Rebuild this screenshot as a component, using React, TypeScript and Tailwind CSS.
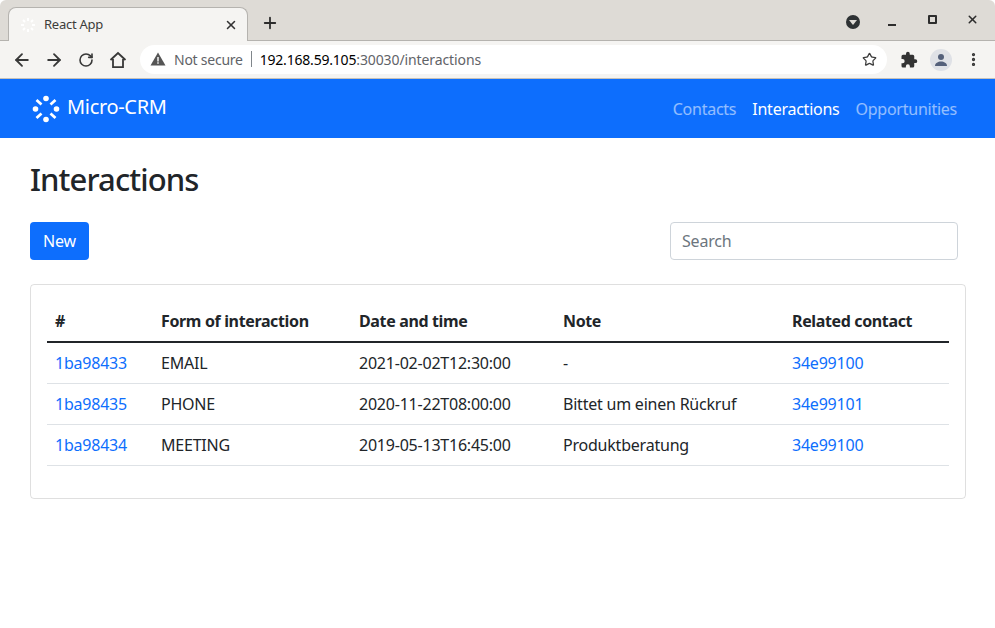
import React from 'react';
import { ArrowLeft, ArrowRight, RotateCw, Star, Plus, X, EllipsisVertical } from 'lucide-react';

const FONT = "font-['Noto_Sans','Open_Sans',sans-serif]";

interface Interaction {
  id: string;
  form: string;
  date: string;
  note: string;
  contact: string;
}

const rows: Interaction[] = [
  { id: '1ba98433', form: 'EMAIL', date: '2021-02-02T12:30:00', note: '-', contact: '34e99100' },
  { id: '1ba98435', form: 'PHONE', date: '2020-11-22T08:00:00', note: 'Bittet um einen Rückruf', contact: '34e99101' },
  { id: '1ba98434', form: 'MEETING', date: '2019-05-13T16:45:00', note: 'Produktberatung', contact: '34e99100' },
];

const Logo = () => (
  <svg width="28" height="28" viewBox="0 0 28 28" fill="white" stroke="white">
    <circle cx="14" cy="3.5" r="2.8" stroke="none" />
    <circle cx="14" cy="24.5" r="2.8" stroke="none" />
    <circle cx="3.5" cy="14" r="2.8" stroke="none" />
    <circle cx="24.5" cy="14" r="2.8" stroke="none" />
    <path d="M4.5 5 L9.5 9.5 M23.5 5 L18.5 9.5 M4.5 23 L9.5 18.5 M23.5 23 L18.5 18.5" strokeWidth="2.8" fill="none" />
  </svg>
);

const BrowserChrome = () => (
  <div className="flex flex-col h-[79px] font-['Noto_Sans',sans-serif] tracking-[-0.25px]">
    <div className="h-[41px] bg-[#dedbd6] flex items-end pl-2 border-b border-[#b5b3af] rounded-t-md">
      <div className="w-[240px] h-[34px] -mb-px bg-[#f5f4f2] rounded-t-lg border border-b-0 border-[#b5b3af] flex items-center pl-[11px] pr-[9px]">
        <svg width="16" height="16" viewBox="0 0 16 16" stroke="#ffffff" strokeWidth="2">
          <path d="M8 1v3M8 12v3M1 8h3M12 8h3M3 3l2 2M11 11l2 2M3 13l2-2M11 5l2-2" />
        </svg>
        <span className="ml-[8px] text-[13px] text-[#3d3d3b] flex-1">React App</span>
        <X size={14} strokeWidth={2.6} className="text-[#333]" />
      </div>
      <Plus size={18} strokeWidth={2.4} className="text-[#2d2d2d] ml-[13px] mb-2" />
      <div className="flex-1" />
      <div className="flex items-center mr-[16px] mb-[9px]">
        <div className="w-[14px] h-[14px] rounded-full bg-[#2e3234] flex items-center justify-center">
          <div className="w-0 h-0 border-x-[4px] border-x-transparent border-t-[5px] border-t-[#dedbd6]" />
        </div>
        <div className="ml-[28px] w-[8px] h-[2px] bg-[#2d2d2d] mt-[6px]" />
        <div className="ml-[32px] w-[9px] h-[9px] border-2 border-[#2d2d2d] rounded-[1px] mb-[5px]" />
        <X size={13} strokeWidth={2.8} className="text-[#2d2d2d] mb-[5px] ml-[29px]" />
      </div>
    </div>
    <div className="h-[38px] bg-[#f5f4f2] border-b border-[#c5c1ba] flex items-center pl-[12px] pr-[12px]">
      <ArrowLeft size={20} strokeWidth={2.2} className="text-[#383838]" />
      <ArrowRight size={20} strokeWidth={2.2} className="text-[#383838] ml-[12px]" />
      <RotateCw size={16} strokeWidth={2.4} className="text-[#383838] ml-[14px]" />
      <svg width="18" height="18" viewBox="0 0 18 18" fill="none" stroke="#383838" strokeWidth="1.8" className="ml-[15px]">
        <path d="M1.500 9 9 2l7.500 7M4 8v8.200h10V8" />
      </svg>
      <div className="ml-[13px] w-[747px] h-[29px] bg-white rounded-full flex items-center pl-[10px] pr-[10px] pb-[1px] text-[14px]">
        <svg width="16" height="16" viewBox="0 0 16 16" fill="#555">
          <path d="M8 1.5 15.500 14.500H.5Z" />
          <path d="M7.300 6h1.400v4.500H7.300zM7.300 11.300h1.400v1.400H7.300z" fill="#fff" />
        </svg>
        <span className="ml-[8px] text-[#5f6368]">Not secure</span>
        <span className="mx-[8px] w-px h-[16px] bg-[#80868b]" />
        <span className="text-black tracking-[-0.2px]">192.168.59.105</span>
        <span className="text-[#5f6368] tracking-[-0.1px]">:30030/interactions</span>
        <div className="flex-1" />
        <Star size={15} strokeWidth={2} className="text-[#3c3c3c]" />
      </div>
      <svg width="18" height="18" viewBox="0 0 24 24" fill="#333" className="ml-[13px]">
        <path d="M20.500 11H19V7a2 2 0 0 0-2-2h-4V3.500a2.500 2.500 0 0 0-5 0V5H4a2 2 0 0 0-2 2v3.800h1.500a2.700 2.700 0 0 1 0 5.400H2V20a2 2 0 0 0 2 2h3.800v-1.500a2.700 2.700 0 0 1 5.400 0V22H17a2 2 0 0 0 2-2v-4h1.500a2.500 2.500 0 0 0 0-5z" />
      </svg>
      <div className="ml-[12px] w-[22px] h-[22px] rounded-full bg-[#dfe1e6] flex items-center justify-center">
        <svg width="14" height="14" viewBox="0 0 14 14" fill="#54607a">
          <circle cx="7" cy="4" r="3" />
          <path d="M1 13c0-3 3-4.500 6-4.500s6 1.500 6 4.500z" />
        </svg>
      </div>
      <EllipsisVertical size={17} strokeWidth={2.6} className="text-[#333] ml-[13px]" />
    </div>
  </div>
);

export default function App() {
  return (
    <div className={`w-[995px] h-[628px] bg-white overflow-hidden text-[#212529] ${FONT}`}>
      <BrowserChrome />

      <nav className="h-[59px] bg-[#0d6efd] flex items-center justify-between pl-[32px] pr-[38px]">
        <div className="flex items-center gap-[7px] text-white text-[20px] tracking-[-0.33px]">
          <Logo />
          <span className="-mt-[3px]">Micro-CRM</span>
        </div>
        <div className="flex gap-[16px] text-[16px] tracking-[-0.25px]">
          <a className="text-white/55">Contacts</a>
          <a className="text-white">Interactions</a>
          <a className="text-white/55">Opportunities</a>
        </div>
      </nav>

      <main className="pt-[19px] pl-[30px] pr-[29px]">
        <h1 className="text-[31px] leading-[44px] font-medium tracking-[-0.9px]">Interactions</h1>

        <div className="mt-[21px] flex justify-between pr-[8px]">
          <button className="w-[59px] h-[38px] bg-[#0d6efd] text-white rounded text-[16px] tracking-[-0.2px]">New</button>
          <input
            placeholder="Search"
            className="w-[288px] h-[38px] border border-[#ced4da] rounded pl-[11px] pr-3 text-[16px] tracking-[-0.2px] placeholder:text-[#6c757d]"
          />
        </div>

        <div className="mt-[24px] h-[215px] border border-black/[0.125] rounded pt-[16px] px-[16px]">
          <table className="w-[902px] table-fixed border-collapse text-[16px] tracking-[-0.22px]">
            <thead className="tracking-[-0.36px]">
              <tr className="h-[41px] border-b-2 border-[#212529] text-left">
                <th className="w-[106px] px-2 font-bold">#</th>
                <th className="w-[198px] px-2 font-bold">Form of interaction</th>
                <th className="w-[204px] px-2 font-bold">Date and time</th>
                <th className="w-[229px] px-2 font-bold">Note</th>
                <th className="px-2 font-bold">Related contact</th>
              </tr>
            </thead>
            <tbody>
              {rows.map(row => (
                <tr key={row.id} className="h-[41px] border-b border-[#dee2e6]">
                  <td className="px-2"><a className="text-[#0d6efd]">{row.id}</a></td>
                  <td className="px-2">{row.form}</td>
                  <td className="px-2">{row.date}</td>
                  <td className="px-2">{row.note}</td>
                  <td className="px-2"><a className="text-[#0d6efd]">{row.contact}</a></td>
                </tr>
              ))}
            </tbody>
          </table>
        </div>
      </main>
    </div>
  );
}
